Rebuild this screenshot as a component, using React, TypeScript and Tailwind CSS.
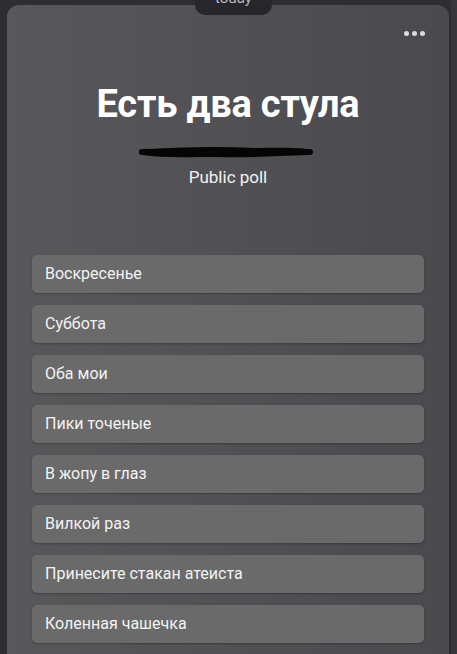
import React from "react";

const options = [
  "Воскресенье",
  "Суббота",
  "Оба мои",
  "Пики точеные",
  "В жопу в глаз",
  "Вилкой раз",
  "Принесите стакан атеиста",
  "Коленная чашечка",
];

export default function App() {
  return (
    <div
      className="relative w-[457px] h-[654px] overflow-hidden bg-[#2e2e32]"
      style={{ fontFamily: "Roboto, 'Noto Sans', sans-serif" }}
    >
      <div className="absolute right-0 top-0 h-full w-[6px] bg-[#38383c]" />
      <div className="ml-[7px] mt-[5px] w-[442px] h-[680px] rounded-[12px] bg-gradient-to-r from-[#58585b] to-[#4a4a4e] relative">
        <div className="absolute right-[24px] top-[26px] flex gap-[3px]">
          <span className="w-[5px] h-[5px] rounded-full bg-[#dcdcdc]" />
          <span className="w-[5px] h-[5px] rounded-full bg-[#dcdcdc]" />
          <span className="w-[5px] h-[5px] rounded-full bg-[#dcdcdc]" />
        </div>
        <div className="flex flex-col items-center pt-[75px]">
          <h1 className="text-[38px] leading-[48px] font-bold text-white tracking-[-0.2px]">
            Есть два стула
          </h1>
          <svg width="180" height="20" viewBox="0 0 180 20" className="mt-[14px] -ml-[4px]">
            <path
              d="M4 8 C40 5, 80 4, 120 6 C140 6, 160 5, 174 8 L172 13 C140 14, 110 16, 80 15 C50 15, 25 16, 6 13 Z"
              fill="#050505"
            />
            <path d="M6 10 C60 9, 120 8, 174 10" stroke="#050505" strokeWidth="6" fill="none" strokeLinecap="round" />
          </svg>
          <div className="mt-[3px] text-[17px] leading-[24px] text-[#f2f2f2]">Public poll</div>
        </div>
        <div className="flex flex-col gap-[12px] px-[25px] mt-[66px]">
          {options.map((o) => (
            <div
              key={o}
              className="h-[38px] rounded-[5px] bg-[#6a6a6a] shadow-[0_1px_2px_rgba(0,0,0,0.25)] flex items-center pl-[13px] text-[16px] text-[#f3f3f3]"
            >
              {o}
            </div>
          ))}
        </div>
      </div>
      <div className="absolute left-[195px] top-[-10px] w-[77px] h-[25px] rounded-[10px] bg-[#27272b] flex items-start justify-center">
        <span className="text-[15px] leading-[16px] text-[#b8b8bc]">today</span>
      </div>
    </div>
  );
}
